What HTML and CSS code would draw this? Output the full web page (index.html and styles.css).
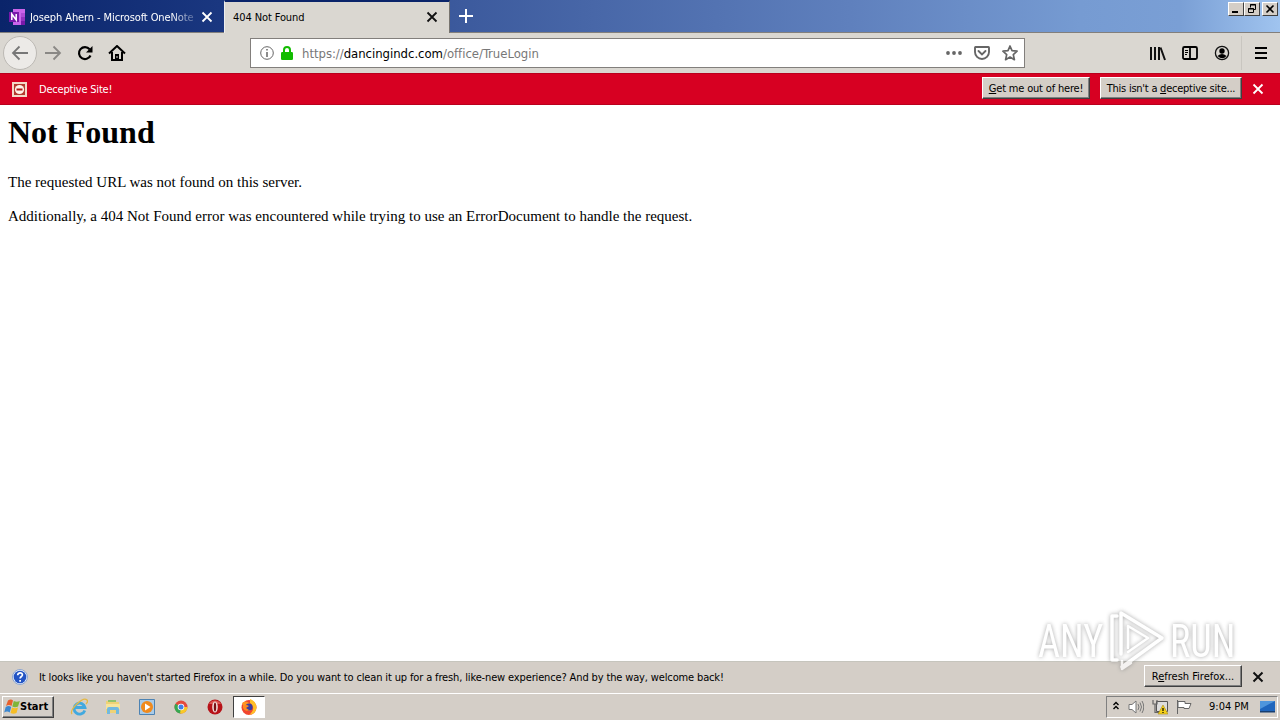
FILE: index.html
```html
<!DOCTYPE html>
<html lang="en">
<head>
  <meta charset="UTF-8" />
  <title>404 Not Found</title>
  <link rel="stylesheet" href="styles.css">
</head>
<body>

  <div class="tabbar">
    <div class="tab">
      <svg class="favicon" width="16" height="16" viewBox="0 0 16 16">
        <path fill="#ca64ea" d="M4 0h12v16H4z"/>
        <path fill="#ae4bd5" d="M12 4h4v4h-4z"/>
        <path fill="#9332bf" d="M12 8h4v4h-4z"/>
        <path fill="#7719aa" d="M12 12h4v4h-4zM0 3h10v10H0z"/>
        <path fill="none" stroke="#fff" stroke-width="1.5" d="M2.8 11V5l4.4 6V5"/>
      </svg>
      <span class="tab-title faded">Joseph Ahern - Microsoft OneNote</span>
      <svg class="tab-close" width="12" height="12" viewBox="0 0 12 12"><path d="M1.500 1.500l9 9M10.500 1.500l-9 9" stroke="#fff" stroke-width="1.800"/></svg>
    </div>
    <div class="tab active">
      <span class="tab-title">404 Not Found</span>
      <svg class="tab-close" width="12" height="12" viewBox="0 0 12 12"><path d="M1.500 1.500l9 9M10.500 1.500l-9 9" stroke="#111" stroke-width="1.800"/></svg>
    </div>
    <svg class="new-tab" width="14" height="14" viewBox="0 0 14 14"><path d="M7 0v14M0 7h14" stroke="#fff" stroke-width="2"/></svg>
    <div class="window-buttons">
      <span class="wb"><svg width="12" height="10" viewBox="0 0 12 10"><path d="M2 8h6" stroke="#000" stroke-width="2"/></svg></span>
      <span class="wb"><svg width="12" height="10" viewBox="0 0 12 10" fill="none" stroke="#000"><path d="M4.500 3.500v-3h5v5h-2M4 1h6M2.500 4.500h5v4h-5zM2 5h6"/></svg></span>
      <span class="wb last"><svg width="12" height="10" viewBox="0 0 12 10"><path d="M2.500 1.500l7 7M9.500 1.500l-7 7" stroke="#000" stroke-width="1.600"/></svg></span>
    </div>
  </div>

  <div class="toolbar">
    <div class="nav">
      <span class="back"><svg width="18" height="16" viewBox="0 0 18 16" fill="none" stroke="#777" stroke-width="1.800"><path d="M17 8H2M8.500 1.500L2 8l6.500 6.500"/></svg></span>
      <svg width="18" height="16" viewBox="0 0 18 16" fill="none" stroke="#8a8885" stroke-width="1.800"><path d="M1 8h15M9.500 1.500L16 8l-6.500 6.500"/></svg>
      <svg width="16" height="16" viewBox="0 0 16 16"><path d="M13.500 10.500A6 6 0 1 1 12.600 4.200" fill="none" stroke="#000" stroke-width="2.200"/><path d="M15.500 1v6.500H9z"/></svg>
      <svg width="18" height="16" viewBox="0 0 18 16" fill="none" stroke="#000" stroke-width="2"><path d="M1 8.500L9 1l8 7.500M4 7v8h10V7"/><path d="M7 9h4v6H7z" fill="#000" stroke="none"/><path d="M9 11v2" stroke="#dad6d0" stroke-width="1"/></svg>
    </div>
    <div class="urlbar">
      <svg width="14" height="14" viewBox="0 0 14 14" fill="none" stroke="#666"><circle cx="7" cy="7" r="6.300"/><path d="M7 6v5M7 3v1.500" stroke-width="1.500"/></svg>
      <svg class="lock" width="12" height="14" viewBox="0 0 12 14"><path d="M3 7V4a3 3 0 0 1 6 0v3" fill="none" stroke="#12bc00" stroke-width="2"/><rect y="6" width="12" height="8" rx="1.300" fill="#12bc00"/></svg>
      <span class="url">https://<b>dancingindc.com</b>/office/TrueLogin</span>
      <div class="url-actions">
        <svg width="16" height="16" viewBox="0 0 16 16" fill="#666"><circle cx="2" cy="8" r="1.900"/><circle cx="8" cy="8" r="1.900"/><circle cx="14" cy="8" r="1.900"/></svg>
        <svg width="16" height="16" viewBox="0 0 16 16" fill="none" stroke="#666" stroke-width="1.900"><path d="M1.500 2h13q.5 0 .5.800V7a7 7 0 0 1-14 0V2.800Q1 2 1.500 2z"/><path d="M4.500 6L8 9.400 11.500 6" stroke-linecap="round"/></svg>
        <svg width="16" height="16" viewBox="0 0 16 16" fill="none" stroke="#666" stroke-width="1.700" stroke-linejoin="round"><path d="M8 1l2 4.700 5.100.500-3.800 3.400 1.100 5.100L8 12.100l-4.400 2.600 1.100-5.100L.9 6.200 6 5.700z"/></svg>
      </div>
    </div>
    <div class="tools">
      <svg width="16" height="16" viewBox="0 0 16 16" stroke="#111" stroke-width="2"><path d="M1 2v13M5 2v13M9 2v13M10.500 2.500L15 15"/></svg>
      <svg width="16" height="16" viewBox="0 0 16 16" fill="none" stroke="#000" stroke-width="1.800"><rect x="1" y="2" width="14" height="12" rx="1.500"/><path d="M8 2v12"/><path d="M3 5.500h3M3 7.500h3M3 9.500h2" stroke-width="1"/></svg>
      <svg width="16" height="16" viewBox="0 0 16 16"><circle cx="8" cy="8" r="6.600" fill="none" stroke="#111" stroke-width="1.300"/><circle cx="8" cy="6" r="2.700"/><path d="M3.500 11q4.500-4 9 0-4 4.500-9 0z"/></svg>
      <svg class="menu" width="14" height="14" viewBox="0 0 14 14" stroke="#000" stroke-width="2"><path d="M1 2h12M1 7h12M1 12h12"/></svg>
    </div>
  </div>

  <div class="warning">
    <svg width="15" height="15" viewBox="0 0 15 15"><rect width="15" height="15" fill="#f3d9c8"/><rect x="2" y="2" width="11" height="11" fill="#b4392f"/><circle cx="7.500" cy="7.500" r="4.600" fill="#fff3ea"/><path d="M4.500 7.500h6" stroke="#b01919" stroke-width="2"/></svg>
    <span class="warning-text">Deceptive Site!</span>
    <button class="btn out"><span><u>G</u>et me out of here!</span></button>
    <button class="btn not"><span>This isn't a <u>d</u>eceptive site...</span></button>
    <svg class="close" width="12" height="12" viewBox="0 0 12 12"><path d="M1.500 1.500l9 9M10.500 1.500l-9 9" stroke="#fff" stroke-width="1.800"/></svg>
  </div>

  <div class="page">
    <h1>Not Found</h1>
    <p class="p1">The requested URL was not found on this server.</p>
    <p>Additionally, a 404 Not Found error was encountered while trying to use an ErrorDocument to handle the request.</p>
  </div>

  <div class="notice">
    <svg width="16" height="16" viewBox="0 0 16 16"><circle cx="8" cy="8" r="7.500" fill="#e7effc" stroke="#8ca5cf"/><circle cx="8" cy="8" r="6.300" fill="#2354c4"/><path d="M5.700 6.200C5.700 3 10.600 3.200 10.400 6 10.300 7.500 8.100 7.600 8.100 9.600M8.100 10.900v1.800" fill="none" stroke="#fff" stroke-width="1.700"/></svg>
    <span class="notice-text">It looks like you haven't started Firefox in a while. Do you want to clean it up for a fresh, like-new experience? And by the way, welcome back!</span>
    <button class="btn refresh"><span>R<u>e</u>fresh Firefox...</span></button>
    <svg class="close" width="12" height="12" viewBox="0 0 12 12"><path d="M1.500 1.500l9 9M10.500 1.500l-9 9" stroke="#111" stroke-width="2"/></svg>
  </div>

  <div class="taskbar">
    <div class="start">
      <svg width="16" height="16" viewBox="0 0 16 16"><path d="M4 1.500q3-2 5 0L7.500 7Q5 5 2 7z" fill="#e8602c"/><path d="M9.800 2q3 1.500 6 0L14 7.500q-3 1.500-5.700 0z" fill="#7fb539"/><path d="M1.700 8q3-2 5.500 0l-1.500 5.500q-2.500-2-5.500 0z" fill="#3b87d0"/><path d="M8 8.500q3 1.500 6 0l-1.500 5.500q-3 1.500-6 0z" fill="#f6bd25"/></svg>
      <span>Start</span>
    </div>
    <div class="launch">
      <svg width="18" height="18" viewBox="0 0 18 18" fill="none"><path d="M14.800 12.500A5.500 5.500 0 1 1 15 9.500H5" stroke="#42a9df" stroke-width="2.800"/><path d="M2 16C-1 12 13-2 17 2c1 1 0 3-1 4" stroke="#e5b843" stroke-width="1.300"/></svg>
      <svg width="18" height="18" viewBox="0 0 18 18"><path d="M2 3h5l1 1h7v11H2z" fill="#efd276"/><path d="M4 2h8v2H4z" fill="#91c36e"/><path d="M2 6h14v5H2z" fill="#f7e49b"/><path d="M3 16v-5q0-2 2-2h8q2 0 2 2v5h-3v-4H6v4z" fill="#72b9df"/></svg>
      <svg width="18" height="18" viewBox="0 0 18 18"><path d="M1.500 1.500h15v15h-15z" fill="#a9cbe8" stroke="#4d83b3"/><circle cx="9" cy="9" r="6" fill="#f08a1d"/><path d="M7 5.500L12.500 9 7 12.500z" fill="#fff"/></svg>
      <svg width="18" height="18" viewBox="0 0 18 18"><circle cx="9" cy="9" r="6.500" fill="#e44a3d"/><path d="M9 9L3.400 5.700A6.500 6.500 0 0 0 9 15.500z" fill="#36a852"/><path d="M9 9h6.500A6.500 6.500 0 0 1 8 15.400z" fill="#f9c927"/><circle cx="9" cy="9" r="3.300" fill="#fff"/><circle cx="9" cy="9" r="2.500" fill="#3f7fe8"/></svg>
      <svg width="18" height="18" viewBox="0 0 18 18"><circle cx="9" cy="9" r="7.500" fill="#b71218"/><path d="M3 6a7 7 0 0 1 12 0z" fill="#dc5552"/><ellipse cx="9" cy="9" rx="2.800" ry="5.500" fill="#f2dfdc"/><ellipse cx="9" cy="9" rx="1.200" ry="4.600" fill="#781015"/></svg>
    </div>
    <div class="task">
      <svg width="18" height="18" viewBox="0 0 18 18"><circle cx="9" cy="9.500" r="7.500" fill="#f1462f"/><path d="M10 1q7 3 6.500 9-.5 6-7.500 7 5-4 4-8-1-3-3-4z" fill="#ffbf27"/><path d="M2 5q4-3 7 0l3 3-2 5-5-1z" fill="#ff9423"/><circle cx="9" cy="9" r="3.600" fill="#3b3ca0"/><path d="M3 8q3-2 6 0l-3 2 3 2q-4 2-6-2z" fill="#ff8a1f"/></svg>
    </div>
    <div class="tray">
      <svg width="8" height="12" viewBox="0 0 8 12" fill="none" stroke="#000" stroke-width="1.400"><path d="M1.500 4l2.500-2.500L6.500 4M1.500 8L4 5.500 6.500 8"/></svg>
      <svg width="16" height="16" viewBox="0 0 16 16" fill="#fff" stroke="#777"><path d="M1 5.500h3L8 2v12l-4-3.500H1z"/><path d="M10 5q2 3 0 6M12 3.500q3 4.500 0 9M14 2q3.500 6 0 12" fill="none"/></svg>
      <svg width="16" height="16" viewBox="0 0 16 16"><path d="M4.500 2.500h11v10h-11z" fill="#ddd" stroke="#555"/><path d="M1 1v4h4V1M3 5v8.500h5" fill="none" stroke="#666" stroke-width="1.200"/><path d="M11 6l5 9H6z" fill="#f5d119" stroke="#a78b14" stroke-width=".6"/><path d="M11 9v3M11 13v1" stroke="#000" stroke-width="1.200"/></svg>
      <svg width="16" height="16" viewBox="0 0 16 16" fill="#fff" stroke="#666"><path d="M1.500 1v14"/><path d="M2 2.500h7v2h6l-2 5H8v-1H2z"/></svg>
      <span class="clock">9:04 PM</span>
      <svg width="17" height="14" viewBox="0 0 17 14"><path d="M1 1h15v10H1z" fill="#1f66bd"/><path d="M1 1h15L1 9z" fill="#4f96dc"/><path d="M1 11h15v1.500H1z" fill="#173e70"/></svg>
    </div>
  </div>

  <!-- sits over the page and the notice bar -->
  <div class="watermark">
    <span class="any">ANY</span>
    <svg width="58" height="66" viewBox="0 0 58 66" fill="none" stroke="#fff" stroke-width="3.500" stroke-linejoin="round" stroke-linecap="round"><path d="M10 8H5v44h5M14 46V5l41 25-40 29"/><path d="M21 40V18l20 12-20 14M15 53v8l9-6" stroke-width="2.500"/></svg>
    <span class="run">RUN</span>
  </div>

</body>
</html>
```

FILE: styles.css
```css
:root {
  --chrome: #dad7d1;
  --face: #d4cec7;
  --red: #d70022;
}
* {
  box-sizing: border-box;
}
body {
  margin: 0;
  width: 1280px;
  height: 720px;
  overflow: hidden;
  display: flex;
  flex-direction: column;
  position: relative;
  background: #fff;
  color: #000;
  font-family: "DejaVu Sans Condensed", "DejaVu Sans", sans-serif;
  font-stretch: condensed;
  font-size: 11px;
}
svg {
  display: block;
  flex: none;
}
span {
  white-space: nowrap;
}
.tabbar {
  height: 33px;
  flex: none;
  display: flex;
  background: linear-gradient(90deg, #0a246a 0, #1a3780 220px, #3c5a9d 460px, #5f80bd 850px, #769bd2 1080px, #7a9fd5 1180px, #a0c4ef 1280px);
  border-bottom: 1px solid #827f7c;
}
.tab {
  width: 224px;
  height: 32px;
  padding: 2px 11px 0 9px;
  display: flex;
  align-items: center;
  color: #fff;
}
.tab.active {
  width: 226px;
  height: 33px;
  padding: 0 11px 1px 8px;
  background: var(--chrome);
  border-top: 2px solid #0a246a;
  border-left: 1px solid #eee;
  border-right: 1px solid #77746f;
  color: #000;
}
.favicon {
  margin-right: 5px;
}
.tab-title {
  letter-spacing: -0.1px;
}
.tab-title.faded {
  width: 167px;
  mask-image: linear-gradient(90deg, #000 84%, rgba(0, 0, 0, 0.15));
}
.tab-close {
  margin-left: auto;
}
.new-tab {
  margin: 9px 0 0 9px;
}
.window-buttons {
  display: flex;
  margin: 2px 2px 0 auto;
}
.wb {
  width: 16px;
  height: 14px;
  padding: 1px;
  background: var(--face);
  border: 1px solid;
  border-color: #fff #404040 #404040 #fff;
}
.wb.last {
  margin-left: 2px;
}
.toolbar {
  height: 40px;
  flex: none;
  display: flex;
  align-items: center;
  background: var(--chrome);
}
.nav {
  width: 250px;
  display: flex;
  align-items: center;
  gap: 15px;
  padding-left: 3px;
}
.back {
  width: 34px;
  height: 34px;
  margin-right: -8px;
  display: flex;
  align-items: center;
  justify-content: center;
  border: 1px solid #bcb9b4;
  border-radius: 50%;
  background: #eceae7;
}
.urlbar {
  width: 775px;
  height: 30px;
  display: flex;
  align-items: center;
  padding: 0 6px 0 9px;
  background: #fff;
  border: 1px solid #827f7c;
}
.lock {
  margin: 0 9px 0 7px;
}
.url {
  font-size: 13px;
  color: #777;
  letter-spacing: -0.03px;
}
.url b {
  font-weight: normal;
  color: #000;
}
.url-actions {
  display: flex;
  gap: 12px;
  margin-left: auto;
}
.tools {
  height: 34px;
  display: flex;
  align-items: center;
  gap: 16px;
  margin-left: auto;
}
.menu {
  box-sizing: content-box;
  margin-left: -5px;
  padding: 10px 12px;
  border-left: 1px solid #c9c6c0;
}
.warning {
  height: 32px;
  flex: none;
  display: flex;
  align-items: center;
  padding: 0 16px 0 12px;
  background: var(--red);
  border-top: 1px solid #b9001d;
  border-bottom: 1px solid #b9001d;
  color: #fff;
}
.warning-text {
  margin-left: 12px;
  letter-spacing: -0.2px;
}
.btn {
  height: 22px;
  padding: 0;
  background: var(--face);
  border: 1px solid;
  border-color: #fff #404040 #404040 #fff;
  box-shadow: inset -1px -1px #808080;
  font: inherit;
  letter-spacing: -0.18px;
  color: #000;
}
.out {
  width: 108px;
  margin: 0 0 2px auto;
}
.not {
  width: 142px;
  margin: 0 0 2px 10px;
  letter-spacing: -0.24px;
}
.close {
  margin-left: 10px;
}
.page {
  flex: 1;
  padding: 8px;
  font-family: "Liberation Serif", serif;
  font-size: 15px;
}
.page h1 {
  margin: 0;
  font-size: 32px;
  line-height: 38px;
}
.page p {
  margin: 16px 0 0;
  line-height: 18px;
}
.page .p1 {
  margin-top: 22px;
}
.notice {
  height: 32px;
  flex: none;
  display: flex;
  align-items: center;
  padding: 0 16px 1px 12px;
  background: var(--face);
  border-top: 1px solid #c6c5bd;
}
.notice-text {
  margin-left: 11px;
  letter-spacing: -0.14px;
}
.refresh {
  width: 98px;
  margin: 0 -1px 2px auto;
  letter-spacing: 0;
}
.notice .close {
  margin-left: 11px;
}
.taskbar {
  height: 27px;
  flex: none;
  display: flex;
  align-items: center;
  padding: 0 2px 1px;
  background: var(--face);
  border-top: 1px solid #fff;
}
.start {
  width: 52px;
  height: 22px;
  display: flex;
  align-items: center;
  padding-left: 1px;
  border: 1px solid;
  border-color: #fff #404040 #404040 #fff;
  box-shadow: inset -1px -1px #808080;
  font-weight: bold;
}
.launch {
  display: flex;
  gap: 16px;
  margin-left: 16px;
}
.task {
  width: 32px;
  height: 22px;
  display: flex;
  align-items: center;
  justify-content: center;
  margin-left: 9px;
  background: #fff;
  border: 1px solid;
  border-color: #404040 #fff #fff #404040;
}
.tray {
  width: 172px;
  height: 22px;
  display: flex;
  align-items: center;
  gap: 8px;
  margin-left: auto;
  padding-left: 5px;
  border: 1px solid;
  border-color: #808080 #fff #fff #808080;
}
.clock {
  width: 41px;
  margin: 0 1px 0 9px;
}
.watermark {
  position: absolute;
  left: 1038px;
  top: 608px;
  height: 66px;
  display: flex;
  align-items: center;
  gap: 5px;
  color: #fff;
  font-family: Roboto, sans-serif;
  font-size: 46px;
  font-stretch: condensed;
  opacity: 0.75;
  filter: drop-shadow(0 0 2px #888);
}
.any,
.run {
  width: 64px;
  transform: scaleX(0.83);
  transform-origin: left;
}
```
